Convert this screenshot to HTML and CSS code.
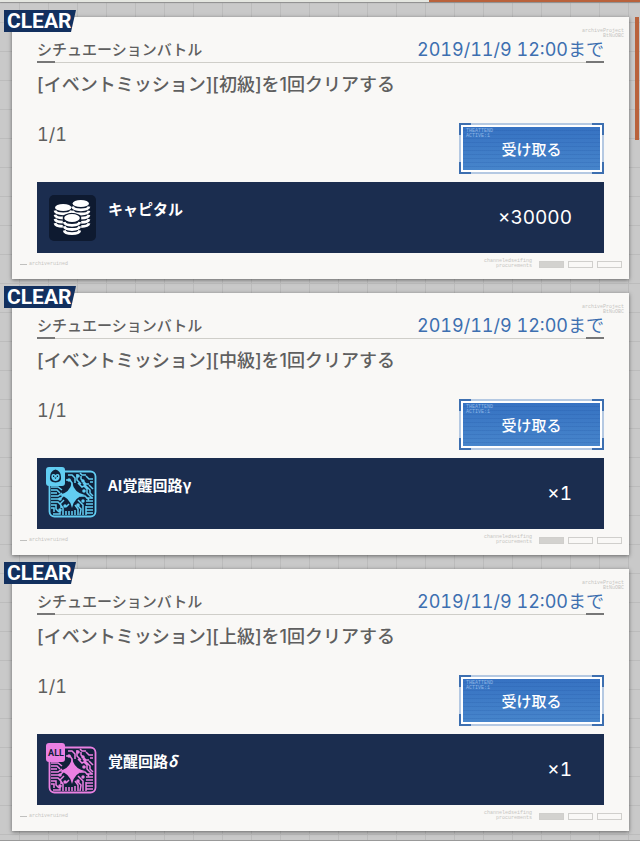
FILE: index.html
```html
<!DOCTYPE html>
<html lang="ja">
<head>
  <meta charset="UTF-8">
  <meta name="viewport" content="width=device-width, initial-scale=1.0">
  <title>イベントミッション</title>
  <link rel="stylesheet" href="styles.css">
</head>
<body>
  <svg class="sprite" aria-hidden="true">
    <symbol id="coins" viewBox="0 0 56 56">
      <rect x="5" y="7" width="47" height="46" rx="5" fill="#0e1a30"/>
      <!-- right, left, then front stack -->
      <ellipse cx="36.800" cy="15.500" rx="8.200" ry="3.600" fill="#fff"/>
      <ellipse cx="19.200" cy="19.500" rx="8.200" ry="3.600" fill="#fff"/>
      <g fill="none" stroke="#fff" stroke-width="2.800">
        <path d="M28.600 18.500c1 4.400 15.400 4.400 16.400 0M28.600 22.700c1 4.400 15.400 4.400 16.400 0M28.600 26.900c1 4.400 15.400 4.400 16.400 0M28.600 31.100c1 4.400 15.400 4.400 16.400 0M28.600 35.300c1 4.400 15.400 4.400 16.400 0"/>
        <path d="M11 22.500c1 4.400 15.400 4.400 16.400 0M11 26.700c1 4.400 15.400 4.400 16.400 0M11 30.900c1 4.400 15.400 4.400 16.400 0M11 35.100c1 4.400 15.400 4.400 16.400 0"/>
      </g>
      <path d="M18.800 29.500c0-6 18.400-6 18.400 0v15c0 5-18.400 5-18.400 0z" fill="#0e1a30"/>
      <ellipse cx="28" cy="30" rx="7.800" ry="4" fill="#fff"/>
      <path d="M20.200 34c1 4.400 14.600 4.400 15.600 0M20.200 38.200c1 4.400 14.600 4.400 15.600 0M20.200 42.400c1 4.400 14.600 4.400 15.600 0" fill="none" stroke="#fff" stroke-width="2.800"/>
    </symbol>
    <symbol id="circuit" viewBox="0 0 56 56">
      <rect x="5.500" y="7.500" width="46" height="45" rx="5" fill="#10213a" stroke="currentColor" stroke-width="1.800"/>
      <g fill="none" stroke="currentColor" stroke-width="1.500">
        <path d="M24 11h4l3 3v5M22 16h4l2 3v4M33 10v6l4 4M37 12v3l5 5h3M36 9l2 2h4M49 15h-4l-3-3M49 18h-3M34 19l4 4 2-1 3 3v4l5 5M39 19l7 7v3l3 3M45 21l4 4"/>
        <path d="M7 23h7l4 3M7 26h6l3 3M7 29h6M7 32h7l4-3M7 35h9l4-4M7 38h7l3 3v3M7 41h5v4l3 3M7 44h3v4M9 50h7v-4M19 51v-7l-3-4 4-4M22 51v-4M25 51v-4M28 51v-4M31 51v-5M22 43l3-3M34 51v-6l-3-4"/>
        <path d="M36 51l1-6-4-4M39 51V41l-5-5M42 51v-9M42 34h7M42 37h7M42 40h7M42 43h7M42 46h7M42 49h7M36 32h5l4 4"/>
      </g>
      <g fill="currentColor">
        <path d="M28 18q2 11 13 13-11 2-13 13-2-11-13-13 11-2 13-13z"/>
        <circle cx="34" cy="12" r="1.800"/><circle cx="39" cy="17" r="1.700"/><circle cx="25" cy="16" r="1.700"/>
        <circle cx="16" cy="35" r="1.800"/><circle cx="16" cy="46" r="1.800"/><circle cx="21" cy="42" r="1.700"/>
        <circle cx="34" cy="41" r="1.800"/><circle cx="39" cy="37" r="1.700"/><circle cx="40" cy="27" r="1.800"/>
        <rect x="2" y="3" width="19" height="19" rx="3"/>
      </g>
    </symbol>
  </svg>

  <div class="topbar"><span class="topbar-accent"></span></div>

  <main class="missions">
    <article class="card">
      <span class="clear">CLEAR</span>
      <p class="micro stamp" aria-hidden="true">archiveProject<br>BtNuOBC</p>
      <header class="card-head">
        <span>シチュエーションバトル</span>
        <time class="limit" datetime="2019-11-09T12:00">2019/11/9 12:00まで</time>
      </header>
      <h2>[イベントミッション][初級]を1回クリアする</h2>
      <div class="actions">
        <span class="progress">1/1</span>
        <button class="receive" type="button"><span class="face">受け取る</span></button>
      </div>
      <div class="reward">
        <svg class="icon" aria-hidden="true"><use href="#coins"/></svg>
        <span class="name">キャピタル</span>
        <span class="count">×30000</span>
      </div>
      <footer class="card-foot" aria-hidden="true">
        <span class="micro dash">archiveruined</span>
        <span class="micro note">channeledseifing<br>procurements</span>
        <span class="bar full"></span><span class="bar"></span><span class="bar"></span>
      </footer>
    </article>

    <article class="card">
      <span class="clear">CLEAR</span>
      <p class="micro stamp" aria-hidden="true">archiveProject<br>BtNuOBC</p>
      <header class="card-head">
        <span>シチュエーションバトル</span>
        <time class="limit" datetime="2019-11-09T12:00">2019/11/9 12:00まで</time>
      </header>
      <h2>[イベントミッション][中級]を1回クリアする</h2>
      <div class="actions">
        <span class="progress">1/1</span>
        <button class="receive" type="button"><span class="face">受け取る</span></button>
      </div>
      <div class="reward">
        <svg class="icon cyan" viewBox="0 0 56 56" aria-hidden="true">
          <use href="#circuit"/>
          <path d="M6 13q0-6 5.500-7.500Q17 7 17 13q1 5-5.500 5.500Q5 18 6 13z" fill="#10213a"/>
          <path d="M7.500 14q-.500-4 1.800-4 1.500 0 2.200 1 .7-1 2.200-1 2.300 0 1.800 4-1 3-4 3t-4-3z" fill="currentColor"/>
          <path d="M9 11.500h1.200v1.500H9zM12.800 11.500H14v1.500h-1.200zM10.300 13.500h2.400l-1.200 1.500z" fill="#10213a"/>
        </svg>
        <span class="name">AI覚醒回路γ</span>
        <span class="count">×1</span>
      </div>
      <footer class="card-foot" aria-hidden="true">
        <span class="micro dash">archiveruined</span>
        <span class="micro note">channeledseifing<br>procurements</span>
        <span class="bar full"></span><span class="bar"></span><span class="bar"></span>
      </footer>
    </article>

    <article class="card">
      <span class="clear">CLEAR</span>
      <p class="micro stamp" aria-hidden="true">archiveProject<br>BtNuOBC</p>
      <header class="card-head">
        <span>シチュエーションバトル</span>
        <time class="limit" datetime="2019-11-09T12:00">2019/11/9 12:00まで</time>
      </header>
      <h2>[イベントミッション][上級]を1回クリアする</h2>
      <div class="actions">
        <span class="progress">1/1</span>
        <button class="receive" type="button"><span class="face">受け取る</span></button>
      </div>
      <div class="reward">
        <svg class="icon pink" viewBox="0 0 56 56" aria-hidden="true">
          <use href="#circuit"/>
          <text class="icon-label" x="12" y="16" text-anchor="middle">ALL</text>
        </svg>
        <span class="name">覚醒回路<i>δ</i></span>
        <span class="count">×1</span>
      </div>
      <footer class="card-foot" aria-hidden="true">
        <span class="micro dash">archiveruined</span>
        <span class="micro note">channeledseifing<br>procurements</span>
        <span class="bar full"></span><span class="bar"></span><span class="bar"></span>
      </footer>
    </article>
  </main>
  <div class="scroll-thumb"></div>
</body>
</html>
```
FILE: styles.css
```css
:root{
  --navy:#1b2d4f;
  --clear:#12305f;
  --blue:#3d6fb0;
  --text:#5f5f5f;
  --paper:#f9f8f6;
  --rust:#b9623c;
  --num:"Inter","Noto Sans CJK JP",sans-serif;
}
*{box-sizing:border-box;margin:0}
body{
  position:relative;
  font-family:"Noto Sans CJK JP",sans-serif;
  color:var(--text);
  border-bottom:1px solid #999;
  background-color:#c9c9c9;
  background-image:
    linear-gradient(90deg,#bcbcbc 1px,transparent 1px),
    linear-gradient(#bcbcbc 1px,transparent 1px);
  background-size:29px 29px;
  background-position:19px 22px;
}
.sprite{position:absolute;width:0;height:0}
.topbar{height:2px;display:flex;justify-content:flex-end;background:#e4e6e0;box-shadow:0 1px 1px #8c8c8c}
.topbar-accent{width:33%;background:var(--rust)}
.scroll-thumb{position:absolute;top:17px;right:1px;width:4px;height:123px;background:var(--rust)}

.missions{display:grid;gap:14px;padding:15px 11px 9px 12px}
.card{position:relative;background:var(--paper);padding:20px 25px 0;box-shadow:0 1px 4px rgba(0,0,0,.5)}
.clear{
  position:absolute;left:-8px;top:-7px;
  width:72px;height:22px;padding-left:3px;
  font:700 21px/22px Roboto,sans-serif;color:#fff;
  background:var(--clear);
  clip-path:polygon(0 0,100% 0,calc(100% - 5px) 100%,0 100%);
}
.card-head{
  display:flex;justify-content:space-between;
  height:26px;font-size:15px;line-height:24px;font-weight:500;
  background:
    linear-gradient(#777,#777) left bottom/18px 2px no-repeat,
    linear-gradient(#777,#777) right bottom/18px 2px no-repeat,
    linear-gradient(#cfcec9,#cfcec9) left bottom/100% 1px no-repeat;
}
.limit,.progress,.count{font-family:var(--num);font-size:18px;font-weight:400;font-variant-numeric:tabular-nums}
.limit{color:var(--blue);line-height:26px}
h2{margin-top:8px;font-family:var(--num);font-size:18px;line-height:28px;font-weight:500}
.actions{display:flex;justify-content:space-between;align-items:flex-start;margin-top:24px}
.progress{line-height:24px}

.receive{
  width:145px;height:51px;padding:4px;border:0;cursor:pointer;
  font:500 15px/24px "Noto Sans CJK JP",sans-serif;color:#fff;
  background:
    linear-gradient(var(--blue),var(--blue)) 0 0/12px 2px,
    linear-gradient(var(--blue),var(--blue)) 0 0/2px 12px,
    linear-gradient(var(--blue),var(--blue)) 100% 0/12px 2px,
    linear-gradient(var(--blue),var(--blue)) 100% 0/2px 12px,
    linear-gradient(var(--blue),var(--blue)) 0 100%/12px 2px,
    linear-gradient(var(--blue),var(--blue)) 0 100%/2px 12px,
    linear-gradient(var(--blue),var(--blue)) 100% 100%/12px 2px,
    linear-gradient(var(--blue),var(--blue)) 100% 100%/2px 12px,
    linear-gradient(#fff,#fff) center/calc(100% - 4px) calc(100% - 4px),
    #b5c9e2;
  background-repeat:no-repeat;
}
.face{
  position:relative;display:grid;place-content:center;height:100%;
  background:
    repeating-linear-gradient(transparent 0 3px,rgba(20,70,150,.15) 3px 4px),
    linear-gradient(#3672c2,#4785cb);
}
.face::before{
  content:"THEATTEND\A ACTIVE:1";white-space:pre;
  position:absolute;left:3px;top:2px;
  font:5px/5px "Liberation Mono",monospace;text-align:left;color:#8fb6e6;
}

.reward{display:flex;height:71px;padding:6px 32px 0 7px;background:var(--navy);color:#fff;margin-top:8px}
.icon{flex:none;width:56px;height:56px}
.cyan{color:#62cdf2}
.pink{color:#ea80e2}
.icon-label{font:700 9px Roboto,sans-serif;fill:#10213a}
.name{margin-left:8px;padding-top:9px;font-size:15px;line-height:24px;font-weight:700}
.count{margin-left:auto;padding-top:18px;line-height:24px;font-size:19px}

.card-foot{display:flex;align-items:center;gap:4px;height:26px;padding-bottom:4px;margin:0 -18px 0 -17px}
.micro{font:5px/5px "Liberation Mono",monospace;color:#c6c5c2}
.stamp{position:absolute;right:5px;top:12px;text-align:right}
.dash{display:flex;align-items:center;gap:2px}
.dash::before{content:"";width:7px;height:1px;background:#c0c0be}
.note{margin:0 3px 0 auto;text-align:right}
.bar{width:25px;height:7px;border:1px solid #d0cfcc}
.full{background:#d3d2cf}
```
